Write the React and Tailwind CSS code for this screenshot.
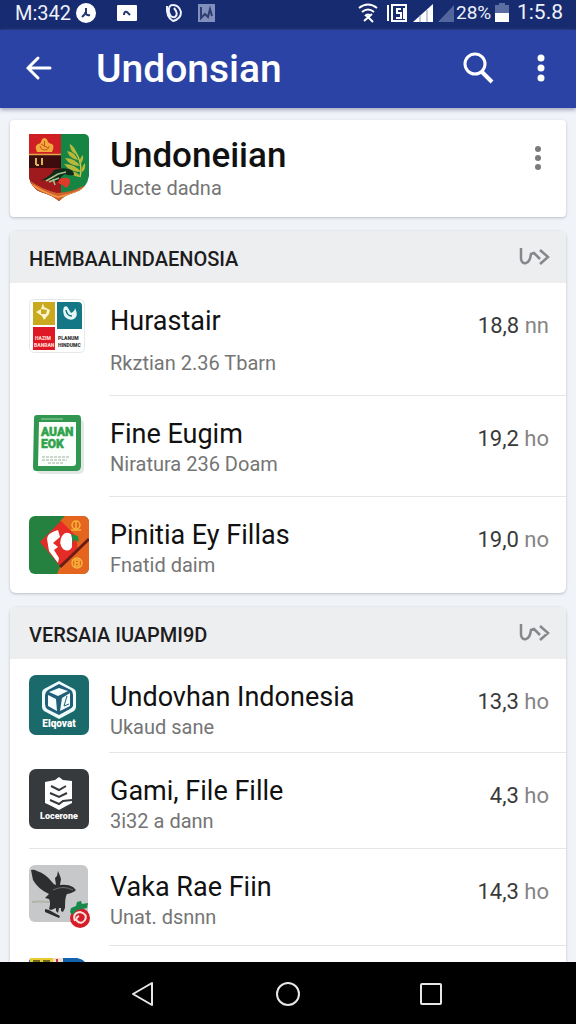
import React from 'react';

const EmblemIcon = () => (
  <svg viewBox="0 0 60 68" className="w-[60px] h-[68px]">
    <defs>
      <clipPath id="shield">
        <path d="M0 0H56Q60 1 60 5V42Q58 54 47 58Q36 61 30 67Q23 61 12 58Q2 54 0 43Z" />
      </clipPath>
    </defs>
    <g clipPath="url(#shield)">
      <rect width="60" height="68" fill="#168443" />
      <path d="M0 0H32V68H0Z" fill="#cf1f23" />
      <path d="M0 21H32V34H0Z" fill="#3c0d0c" />
      <path d="M0 34H32V62H0Z" fill="#9e1a1c" />
      <path d="M0 20.500H32" stroke="#e2a84a" strokeWidth="1.500" />
      <path d="M7 24V31M7 31H10M13 24V31" stroke="#d8b45a" strokeWidth="2" fill="none" />
      <path d="M8 18Q5 12 9 10Q11 10 12 8Q13 4 15.500 4Q18 4 19 8Q21 10 23 10Q26 12 23 18Z" fill="#f3a93c" />
      <path d="M11 12Q12 16 15 16Q20 16 20 12M15.500 7V13M12 10L19 14" stroke="#c4571c" strokeWidth="1" fill="none" />
      <path d="M51 43Q55 26 41 11" stroke="#c9c445" strokeWidth="1.500" fill="none" />
      <path d="M41 10Q41 18 47 20Q47 14 41 10M38 17Q41 25 49 26Q46 18 38 17M36 24Q41 32 51 32Q46 24 36 24M35 30Q41 38 52 38Q46 30 35 30M38 37Q45 43 52 43Q47 36 38 37" fill="#b9b73c" />
      <path d="M54 21Q50 24 51 30Q55 27 54 21M56 29Q52 33 53 38Q57 36 56 29" fill="#b9b73c" />
      <path d="M11 47Q22 42 25 36Q33 33 39 35Q45 36 45 41Q39 42 36 40Q32 42 28 48Q20 44 11 47" fill="#132a1a" />
      <path d="M17 47L29 40L37 38M20 48L30 44M24 45L26 51" stroke="#9fc58d" strokeWidth="1.500" fill="none" />
      <path d="M31 45Q38 42 41 46Q41 52 37 54L34 51L29 49" fill="#e03b2a" />
      <path d="M0 46Q12 55 28 59Q44 58 52 53L60 50V68H0Z" fill="#d2602a" />
      <path d="M3 51Q18 60 29 63Q45 60 54 55" stroke="#f29a49" strokeWidth="1.500" fill="none" />
    </g>
  </svg>
);

const TilesIcon = () => (
  <svg viewBox="0 0 56 54" className="w-14 h-[54px]">
    <rect x="0.500" y="0.500" width="55" height="53" rx="4" fill="#fff" stroke="#e6e8e8" />
    <rect x="4" y="3" width="22" height="23" fill="#c9a91d" />
    <path d="M28 3H49Q53 3 53 7V30H28Z" fill="#147786" />
    <rect x="4" y="28" width="22" height="23" fill="#df1825" />
    <path d="M14 4L15 8L21 11L20 15L15 21L13 17L7 13L12 10Z" fill="#fbf5cf" />
    <path d="M12 10L18 11L17 15L12 15" fill="#c9a91d" />
    <path d="M35 8Q38 6 39 9L42 14Q46 12 46 9Q50 17 45 20Q40 22 36 18Q33 13 35 8Z" fill="#e4f5f3" />
    <path d="M37 11Q38 17 43 17" stroke="#147786" strokeWidth="1.500" fill="none" />
    <g fontFamily="Roboto, sans-serif" fontWeight="900" fontSize="5">
      <text x="6" y="41" fill="#ffd8cf">HAZIM</text>
      <text x="5" y="48" fill="#ffd8cf">BANRAN</text>
      <text x="29" y="41" fill="#333">PLANUM</text>
      <text x="29" y="48" fill="#333">HINDUMC</text>
    </g>
  </svg>
);

const BookIcon = () => (
  <svg viewBox="0 0 52 60" className="w-[52px] h-[60px]">
    <rect x="3" y="4" width="48" height="55" rx="5" fill="#e3e7e5" />
    <path d="M4 0H45Q48 0 48 4V51Q48 56 43 56H3Q0 56 0 52L1 3Q1 0 4 0Z" fill="#31964f" />
    <path d="M6 7H43V48Q43 51 40 51H5Z" fill="#fbfffb" />
    <path d="M8 4H30" stroke="#a0cfab" />
    <g fontFamily="Roboto, sans-serif" fontWeight="900" fontSize="12" fill="#31a34c" stroke="#31a34c" strokeWidth="0.500">
      <text x="8" y="21">AUAN</text>
      <text x="8" y="33">EOK</text>
    </g>
    <path d="M9 42H37M9 45H34M15 48H30" stroke="#9aac9f" strokeWidth="1" strokeDasharray="3 1" />
  </svg>
);

const FruitIcon = () => (
  <svg viewBox="0 0 60 58" className="w-[60px] h-[58px]">
    <defs>
      <clipPath id="fruitTile">
        <rect width="60" height="58" rx="6" />
      </clipPath>
    </defs>
    <g clipPath="url(#fruitTile)">
      <rect width="60" height="58" fill="#258140" />
      <path d="M36 0H60V58H28L40 30L31 5Z" fill="#e5651e" />
      <path d="M32 5L47 20L49 36L31 50L11 26Z" fill="#e52b25" />
      <path d="M29 14Q18 17 18 23L20 35L29 47L30 42L25 34L29 31L24 27L31 21Z" fill="#fff" />
      <path d="M33 20Q37 14 43 19L43 31Q40 37 34 33Q29 27 33 20" fill="#fff" />
      <path d="M42 18L49 20L50 26L46 24L44 27Z" fill="#238c40" />
      <path d="M31 51L60 23" stroke="#681d18" strokeWidth="3" />
      <g fill="none" stroke="#f5b53d" strokeWidth="1.500">
        <circle cx="47" cy="9" r="4" />
        <path d="M42 14H52M47 6V12" />
        <circle cx="48" cy="47" r="5" />
        <path d="M46 44H50V50H46ZM46 47H50" />
      </g>
    </g>
  </svg>
);

const HexIcon = () => (
  <svg viewBox="0 0 60 60" className="w-[60px] h-[60px]">
    <rect width="60" height="60" rx="7" fill="#1a696b" />
    <path d="M30 6L45 14Q47 15 47 18V32Q47 34 45 36L30 44L15 36Q13 34 13 32V18Q13 15 15 14Z" fill="#effafa" />
    <path d="M30 9L42 15Q44 17 44 20V31Q43 33 41 34L30 40L18 34Q16 32 16 29V20Q16 17 19 15Z" fill="#215e78" />
    <path d="M20 17L30 13L39 16L29 21ZM19 20L27 24L28 36L19 31ZM33 23L41 18V31L31 36Z" fill="#f4ffff" />
    <path d="M38 21L35 31L40 29" stroke="#215e78" strokeWidth="1" fill="none" />
    <text x="30" y="52" textAnchor="middle" fontFamily="Roboto, sans-serif" fontWeight="900" fontSize="10" fill="#fff">Elqovat</text>
  </svg>
);

const BadgeIcon = () => (
  <svg viewBox="0 0 60 60" className="w-[60px] h-[60px]">
    <rect width="60" height="60" rx="7" fill="#373a3d" />
    <path d="M30 8L34 11L43 12V34Q37 37 30 41Q23 37 16 34V13L26 11Z" fill="#fff" />
    <g fill="none" stroke="#373a3d" strokeWidth="2">
      <path d="M22 17L30 21L37 17M21 24L30 28L38 24M21 31L30 35L34 32L43 31" />
    </g>
    <text x="30" y="50" textAnchor="middle" fontFamily="Roboto, sans-serif" fontWeight="900" fontSize="9" fill="#fff">Locerone</text>
  </svg>
);

const EagleIcon = () => (
  <svg viewBox="0 0 64 64" className="w-16 h-16">
    <rect width="59" height="57" rx="6" fill="#c7c8ca" />
    <path d="M3 37Q12 36 20 37" stroke="#b1b3a8" strokeWidth="2" fill="none" />
    <path d="M2 5Q5 4 8 6Q17 9 23 17Q25 20 27 20L26 13L28 11L29 6L31 11L32 14L31 20Q39 19 44 22L47 25Q44 28 38 29Q36 31 36 43L34 47L32 46V43H30L29 48L27 46V43L22 45L20 44Q22 38 20 34L16 33L20 29Q9 24 4 15Z" fill="#2c2e30" />
    <path d="M16 44L20 45L31 51L30 53L16 47Z" fill="#292b2c" />
    <path d="M24 25Q34 20 44 25" stroke="#6c6e6f" fill="none" />
    <circle cx="51" cy="53" r="10" fill="#d51e29" />
    <path d="M46 56Q43 48 51 47Q59 49 56 55Q52 60 48 56Q46 53 50 51" fill="none" stroke="#fbe3df" strokeWidth="2" />
    <path d="M42 43L47 41L48 37L52 36L53 39L59 38L58 43L53 44L48 45L43 50L41 47Z" fill="#16894b" />
  </svg>
);

const PartialIcon = () => (
  <svg viewBox="0 0 58 54" className="w-[58px] h-[54px]">
    <path d="M4 0H48Q58 2 58 10V54H0V4Q0 0 4 0Z" fill="#1362ad" />
    <path d="M1 0H24V24H1Z" fill="#e8ca31" />
    <path d="M4 2H11V24H4ZM14 2H21V24H14Z" fill="#6c681e" />
    <path d="M24 0H34V24H24Z" fill="#f4ddcf" />
    <path d="M28 1V24" stroke="#c1352c" strokeWidth="2" />
  </svg>
);

const sections = [
  {
    heading: 'HEMBAALINDAENOSIA',
    rows: [
      { title: 'Hurastair', sub: 'Rkztian 2.36 Tbarn', value: '18,8', unit: 'nn', icon: <TilesIcon />, loose: true, pad: 'pb-[18px]' },
      { title: 'Fine Eugim', sub: 'Niratura 236 Doam', value: '19,2', unit: 'ho', icon: <BookIcon />, inset: 'pl-1', pad: 'pb-[18px]' },
      { title: 'Pinitia Ey Fillas', sub: 'Fnatid daim', value: '19,0', unit: 'no', icon: <FruitIcon />, inset: 'pl-0', pad: 'pb-[14px]', last: true },
    ],
  },
  {
    heading: 'VERSAIA IUAPMI9D',
    rows: [
      { title: 'Undovhan Indonesia', sub: 'Ukaud sane', value: '13,3', unit: 'ho', icon: <HexIcon />, pad: 'pb-[11px]' },
      { title: 'Gami, File Fille', sub: '3i32 a dann', value: '4,3', unit: 'ho', icon: <BadgeIcon />, pad: 'pb-[13px]', wide: true },
      { title: 'Vaka Rae Fiin', sub: 'Unat. dsnnn', value: '14,3', unit: 'ho', icon: <EagleIcon />, pad: 'pb-[14px]' },
    ],
  },
];

const Row = ({ row }) => (
  <li className={`flex ${row.wide ? 'ml-[19px] border-b border-[#e4e5e7]' : 'pl-[19px]'}`}>
    <div className={`w-20 shrink-0 ${row.inset ? `pt-[19px] ${row.inset}` : 'pt-4'}`}>{row.icon}</div>
    <div className={`flex flex-1 min-w-0 justify-between pt-[22px] pr-[17px] ${row.pad} ${row.last || row.wide ? '' : 'border-b border-[#e4e5e7]'}`}>
      <div className="min-w-0 pl-px whitespace-nowrap">
        <h3 className={`text-[27px] leading-8 text-[#111] ${row.loose ? 'mb-3' : ''}`}>{row.title}</h3>
        <p className="text-[20px] leading-7 text-[#757575]">{row.sub}</p>
      </div>
      <p className="pt-[7px] text-[22px] leading-7 text-[#3a3a3a] whitespace-nowrap">
        {row.value} <span className="text-[#858585]">{row.unit}</span>
      </p>
    </div>
  </li>
);

const Section = ({ section, children }) => (
  <section className="shrink-0 rounded-md bg-white shadow-[0_1px_3px_#b9bdc7] overflow-hidden">
    <div className="flex items-center justify-between h-[52px] bg-[#edeef0] pl-[19px] pr-4">
      <h2 className="pt-1 text-[20px] font-medium text-[#1d1d1f] whitespace-nowrap">{section.heading}</h2>
      <button type="button" aria-label="More" className="text-[#85878a]">
        <svg viewBox="0 0 32 22" className="w-8 h-[22px]" fill="none" stroke="currentColor" strokeWidth="2.500">
          <path d="M3 2V13Q4 18 8 17Q12 16 13 8L16 7L22 13M22 4L30 11L22 18" />
        </svg>
      </button>
    </div>
    <ul>
      {section.rows.map((row) => (
        <Row key={row.title} row={row} />
      ))}
      {children}
    </ul>
  </section>
);

const StatusBar = () => (
  <div className="flex items-center justify-between h-[30px] shrink-0 bg-[#172b70] pl-[15px] pr-[13px] pb-1 text-[20px] text-[#eef1fb]">
    <div className="flex items-center">
      <span className="w-[61px] whitespace-nowrap">M:342</span>
      <svg viewBox="0 -2 140 22" className="w-[140px] h-[22px]">
        <circle cx="10" cy="9" r="10" fill="#fff" />
        <path d="M10 4V9L6 13M9 8Q10 12 14 11" stroke="#26366e" strokeWidth="2" fill="none" />
        <rect x="41" y="1" width="20" height="16" rx="1" fill="#fff" />
        <path d="M48 11Q48 7 51 8L54 11" stroke="#26366e" strokeWidth="2" fill="none" />
        <path d="M91 2Q90 13 97 17Q105 15 105 8Q103 1 97 1Q92 1 93 8Q94 14 99 13Q103 10 98 4" stroke="#f1f3ff" strokeWidth="2" fill="none" />
        <rect x="122" y="0" width="17" height="18" fill="#8290bd" />
        <path d="M125 3V14L129 10L132 13L134 5L136 12" stroke="#2f3d70" strokeWidth="2" fill="none" />
      </svg>
    </div>
    <div className="flex items-center">
      <svg viewBox="0 -1 98 22" className="w-[98px] h-[22px]">
        <g fill="none" stroke="#fff" strokeWidth="2">
          <path d="M1 5Q10 -2 19 5M4 9Q10 4 16 9M7 13Q10 10 13 13M6 18L14 11M8 12L15 19" />
        </g>
        <path d="M30 2V18M34 2H48V18H34Z" stroke="#fff" strokeWidth="2" fill="none" />
        <path d="M43 6H39V10H43V15H38M46 5V16" stroke="#fff" strokeWidth="2" fill="none" />
        <path d="M55 19L75 1V19Z" fill="#fff" />
        <path d="M62 12V19M69 7V19" stroke="#8995bd" strokeWidth="1" />
        <path d="M80 19L96 2V19Z" fill="#53659d" />
      </svg>
      <span className="w-[39px] text-[19px]">28%</span>
      <svg viewBox="0 0 14 20" className="w-[14px] h-5">
        <path d="M4 0H10V2H14V10H0V2H4Z" fill="#5c6da2" />
        <path d="M0 10H14V19H0Z" fill="#fff" />
      </svg>
      <span className="ml-2 text-[21px] whitespace-nowrap">1:5.8</span>
    </div>
  </div>
);

const AppBar = () => (
  <header className="flex items-center h-[78px] shrink-0 bg-[#2b43a4] pl-6 pr-5 text-white shadow-[0_2px_4px_#a0a6bd]">
    <button type="button" aria-label="Back">
      <svg viewBox="0 0 28 28" className="w-7 h-7" fill="none" stroke="currentColor" strokeWidth="3" strokeLinecap="round">
        <path d="M14 3L4 13L14 23M4 13H26" />
      </svg>
    </button>
    <h1 className="flex-1 ml-11 pt-px text-[39px] font-medium leading-none">Undonsian</h1>
    <button type="button" aria-label="Search">
      <svg viewBox="0 0 32 34" className="w-8 h-[34px]" fill="none" stroke="currentColor">
        <circle cx="13" cy="12" r="10" strokeWidth="3" />
        <path d="M20 20L30 30" strokeWidth="4" />
      </svg>
    </button>
    <button type="button" aria-label="Menu" className="ml-8">
      <svg viewBox="0 0 30 30" className="w-[30px] h-[30px]" fill="currentColor">
        <circle cx="15" cy="4" r="3.500" />
        <circle cx="15" cy="14" r="3.500" />
        <circle cx="15" cy="24" r="3.500" />
      </svg>
    </button>
  </header>
);

const NavBar = () => (
  <nav className="flex items-center justify-center gap-[112px] h-[62px] shrink-0 bg-black text-[#e6e6e6]">
    <button type="button" aria-label="Back">
      <svg viewBox="0 0 32 32" className="w-8 h-8" fill="none" stroke="currentColor" strokeWidth="2">
        <path d="M24 6V28L5 17Z" strokeLinejoin="round" />
      </svg>
    </button>
    <button type="button" aria-label="Home">
      <svg viewBox="0 0 32 32" className="w-8 h-8" fill="none" stroke="currentColor" strokeWidth="2">
        <circle cx="16" cy="17" r="11" />
      </svg>
    </button>
    <button type="button" aria-label="Recent apps">
      <svg viewBox="0 0 32 32" className="w-8 h-8" fill="none" stroke="currentColor" strokeWidth="2">
        <rect x="5" y="7" width="20" height="20" rx="1" />
      </svg>
    </button>
  </nav>
);

const App = () => {
  return (
    <div className="flex flex-col h-screen bg-[#f0f3f8] font-[Roboto,sans-serif]">
      <StatusBar />
      <AppBar />
      <main className="flex flex-col flex-1 min-h-0 gap-[14px] overflow-hidden px-[10px] pt-3">
        <div className="flex items-start shrink-0 rounded-sm bg-white pt-[14px] pb-[15px] pl-[19px] pr-4 shadow-[0_1px_3px_#b9bdc7]">
          <div className="w-20 shrink-0">
            <EmblemIcon />
          </div>
          <div className="flex-1 pt-1 pl-px">
            <h2 className="text-[35px] leading-9 font-medium text-[#111]">Undoneiian</h2>
            <p className="text-[20px] leading-7 text-[#757575]">Uacte dadna</p>
          </div>
          <button type="button" aria-label="Options" className="mt-3 text-[#7b7b7b]">
            <svg viewBox="0 0 24 24" className="w-6 h-6" fill="currentColor">
              <circle cx="12" cy="3" r="3" />
              <circle cx="12" cy="12" r="3" />
              <circle cx="12" cy="21" r="3" />
            </svg>
          </button>
        </div>
        <Section section={sections[0]} />
        <Section section={sections[1]}>
          <li className="pl-[19px] pt-3">
            <PartialIcon />
          </li>
        </Section>
      </main>
      <NavBar />
    </div>
  );
};

export default App;
